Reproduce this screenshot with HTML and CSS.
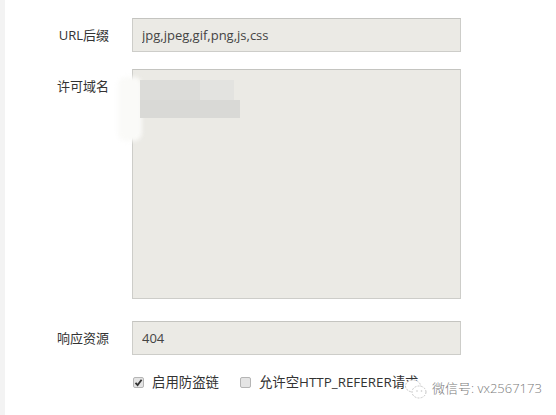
FILE: index.html
```html
<!DOCTYPE html>
<html lang="zh-CN">
<head>
  <meta charset="UTF-8">
  <meta name="viewport" content="width=device-width, initial-scale=1.0">
  <title>防盗链设置</title>
  <link rel="stylesheet" href="styles.css">
</head>
<body>
  <div class="page">
    <form class="form">
      <div class="row">
        <label class="label">URL后缀</label>
        <input class="field" type="text" value="jpg,jpeg,gif,png,js,css">
      </div>
      <div class="row row_domains">
        <label class="label">许可域名</label>
        <div class="area_wrap">
          <textarea class="field area"></textarea>
          <div class="blur blur_white"></div>
          <div class="blur blur_a"></div>
          <div class="blur blur_b"></div>
          <div class="blur blur_c"></div>
        </div>
      </div>
      <div class="row row_res">
        <label class="label">响应资源</label>
        <input class="field" type="text" value="404">
      </div>
      <div class="row row_checks">
        <span class="label"></span>
        <div class="checks">
          <label class="check"><span class="box box_on"><svg viewBox="0 0 11 11" width="11" height="11"><path d="M2.5 5.8 L4.6 8 L8.6 2.8" fill="none" stroke="#333" stroke-width="1.8"/></svg></span>启用防盗链</label>
          <label class="check"><span class="box"></span>允许空HTTP_REFERER请求</label>
        </div>
      </div>
    </form>
    <div class="mark">
      <svg class="mark_icon" viewBox="0 0 24 22" width="24" height="22">
        <ellipse cx="9" cy="8" rx="7.5" ry="6" fill="#fff" stroke="#c8c8c8" stroke-width="1" stroke-dasharray="2 1.2"/>
        <ellipse cx="15" cy="14" rx="7" ry="6" fill="#fff" stroke="#c8c8c8" stroke-width="1" stroke-dasharray="2 1.2"/>
        <circle cx="13" cy="13" r="0.8" fill="#c8c8c8"/>
        <circle cx="17.5" cy="13" r="0.8" fill="#c8c8c8"/>
      </svg>
      <span class="mark_text">微信号: vx2567173</span>
    </div>
  </div>
</body>
</html>
```

FILE: styles.css
```css
body {
  margin: 0;
  background: #fff;
  font-family: "Open Sans", "Noto Sans CJK SC", sans-serif;
  font-size: 13px;
  color: #333;
}

.page {
  position: relative;
  height: 415px;
  border-left: 5px solid #f3f3f3;
  box-sizing: border-box;
  overflow: hidden;
}

.form {
  padding-top: 18px;
}

.row {
  display: flex;
  align-items: flex-start;
}

.row_domains {
  margin-top: 17px;
}

.row_res {
  margin-top: 22px;
}

.row_checks {
  margin-top: 18px;
}

.label {
  width: 104px;
  margin-right: 23px;
  text-align: right;
  line-height: 34px;
  color: #333;
}

.field {
  width: 329px;
  height: 34px;
  box-sizing: border-box;
  margin: 0;
  padding: 0 9px;
  border: 1px solid #cdcdc9;
  border-top-color: #c4c4c0;
  background: #ebeae5;
  font-family: inherit;
  font-size: 13px;
  color: #444;
  outline: none;
}

.area_wrap {
  position: relative;
}

.area {
  display: block;
  height: 230px;
  resize: none;
}

.blur {
  position: absolute;
}

.blur_white {
  left: -14px;
  top: 8px;
  width: 24px;
  height: 64px;
  background: #fafaf8;
  border-radius: 8px;
  filter: blur(2px);
}

.blur_a {
  left: 8px;
  top: 11px;
  width: 60px;
  height: 20px;
  background: #dcdcd9;
}

.blur_b {
  left: 8px;
  top: 31px;
  width: 100px;
  height: 18px;
  background: #d9d9d6;
}

.blur_c {
  left: 68px;
  top: 11px;
  width: 34px;
  height: 20px;
  background: #e3e3e0;
}

.checks {
  display: flex;
  gap: 21px;
  padding-left: 1px;
}

.check {
  display: flex;
  align-items: center;
  color: #333;
  font-size: 13.4px;
  line-height: 18px;
}

.box {
  display: inline-block;
  width: 11px;
  height: 11px;
  margin-right: 8px;
  box-sizing: border-box;
  border: 1px solid #b5b5b5;
  border-radius: 2px;
  background: #e4e4e4;
}

.box svg {
  display: block;
  margin: -1px;
}

.mark {
  position: absolute;
  left: 399px;
  top: 375px;
  display: flex;
  align-items: center;
}

.mark_icon {
  margin-top: 3px;
}

.mark_text {
  margin-left: 4px;
  font-size: 13px;
  color: #7a7a7a;
  font-weight: 300;
}
```
